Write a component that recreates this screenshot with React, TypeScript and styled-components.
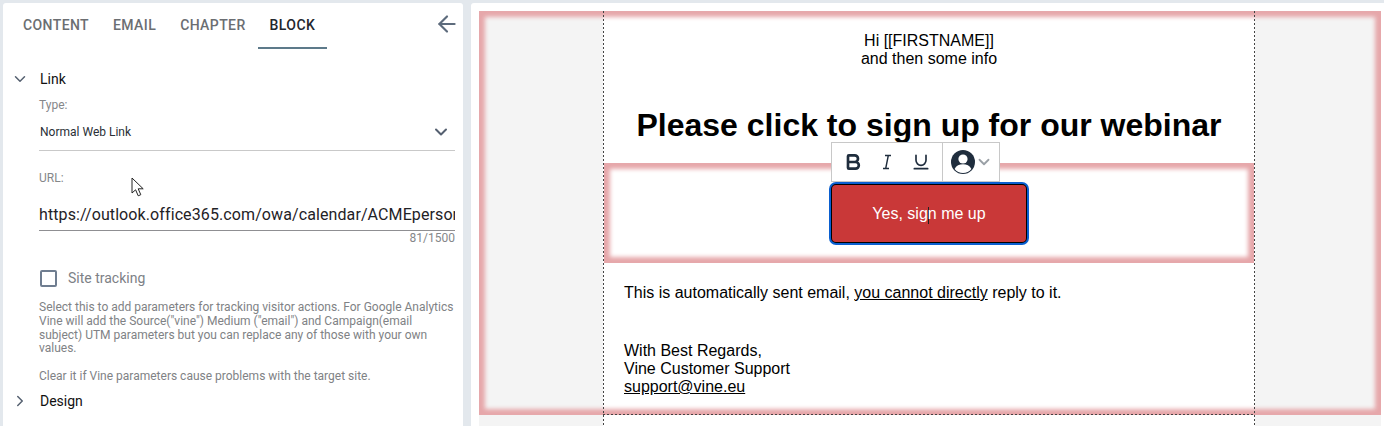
import React from "react";
import styled, { createGlobalStyle } from "styled-components";
import { ArrowLeft, ChevronDown, ChevronRight, Bold, Underline } from "lucide-react";

const GlobalStyle = createGlobalStyle`
  html, body {
    margin: 0;
    padding: 0;
    height: 426px;
    overflow: hidden;
    background: #e3e8ed;
  }
  * {
    box-sizing: border-box;
  }
`;

const Page = styled.div`
  display: flex;
  gap: 8px;
  height: 426px;
  padding: 3px 0 0 3px;
  overflow: hidden;
`;

const Sidebar = styled.aside`
  position: relative;
  flex: 0 0 460px;
  background: #fff;
  border-radius: 3px 3px 0 0;
  font-family: Roboto, sans-serif;
  color: #1b1f24;
`;

const TabBar = styled.div`
  display: flex;
  height: 46px;
  padding-left: 8px;
  align-items: stretch;
  position: relative;
`;

const Tab = styled.div<{ $active?: boolean }>`
  display: flex;
  align-items: center;
  padding: 0 12px;
  height: 46px;
  font-size: 14px;
  font-weight: 500;
  letter-spacing: 0.4px;
  color: ${(p) => (p.$active ? "#22272e" : "#6b6e72")};
  border-bottom: 2px solid ${(p) => (p.$active ? "#5d7a8a" : "transparent")};
`;

const BackIcon = styled(ArrowLeft)`
  position: absolute;
  right: 3px;
  top: 8px;
  color: #5d6b7c;
`;

const SectionRow = styled.div`
  display: flex;
  align-items: center;
  height: 20px;
  font-size: 14px;
  color: #111;
  padding-left: 8px;
  gap: 11px;
  svg {
    color: #556070;
  }
`;

const LinkRow = styled(SectionRow)`
  margin-top: 20px;
`;

const DesignRow = styled(SectionRow)`
  margin-top: 7px;
`;

const Field = styled.div`
  margin-left: 36px;
  width: 416px;
`;

const FieldLabel = styled.div`
  font-size: 12px;
  line-height: 14px;
  color: #85878a;
`;

const TypeLabel = styled(FieldLabel)`
  margin-top: 9px;
`;

const SelectRow = styled.div`
  display: flex;
  align-items: center;
  justify-content: space-between;
  height: 35px;
  margin-top: 4px;
  padding: 0 4px 2px 1px;
  font-size: 12px;
  color: #2a2f36;
  border-bottom: 1px solid #c9c9c9;
  svg {
    color: #556070;
  }
`;

const UrlLabel = styled(FieldLabel)`
  margin-top: 20px;
`;

const UrlInput = styled.div`
  height: 30px;
  margin-top: 16px;
  padding-top: 4px;
  font-size: 16px;
  line-height: 20px;
  white-space: nowrap;
  overflow: hidden;
  color: #1f2226;
  letter-spacing: 0.1px;
  border-bottom: 1px solid #8f8f92;
`;

const Counter = styled.div`
  text-align: right;
  font-size: 12px;
  line-height: 14px;
  color: #85878a;
`;

const CheckRow = styled.div`
  display: flex;
  align-items: center;
  gap: 11px;
  margin-top: 23px;
  height: 20px;
  font-size: 14px;
  color: #7d8186;
`;

const CheckBox = styled.span`
  width: 17px;
  height: 17px;
  margin-left: 1px;
  border: 2px solid #6f7d90;
  border-radius: 2px;
`;

const Help = styled.p`
  margin: 13px 0 0;
  font-size: 12px;
  line-height: 13.8px;
  color: #808285;
`;

const MouseCursor = styled.svg`
  position: absolute;
  left: 128px;
  top: 174px;
`;

const Canvas = styled.main`
  flex: 1;
  min-width: 0;
  background: #fff;
  border-radius: 3px 0 0 0;
  padding: 8px 3px 0 8px;
`;

const Stage = styled.div`
  position: relative;
  height: 100%;
  background: #f4f4f4;
`;

const Frame = styled.div`
  position: absolute;
  left: 0;
  right: 0;
  top: 0;
  height: 404px;
  box-shadow: inset 0 0 4px 6px #e6a7aa;
  pointer-events: none;
  z-index: 2;
`;

const EmailColumn = styled.div`
  width: 652px;
  height: 100%;
  margin-left: 124px;
  background: #fff;
  font-family: "Liberation Sans", Arial, sans-serif;
  color: #000;
  font-size: 16px;
  line-height: 18px;
  display: flex;
  flex-direction: column;
  position: relative;

  /* guide lines of the column, they stay on top of the pink frame */
  &::before {
    content: "";
    position: absolute;
    inset: 0;
    z-index: 3;
    pointer-events: none;
    background:
      repeating-linear-gradient(to bottom, #444 0 2px, transparent 2px 4px) left top / 1px 100% no-repeat,
      repeating-linear-gradient(to bottom, #444 0 2px, transparent 2px 4px) right top / 1px 100% no-repeat;
  }
  &::after {
    content: "";
    position: absolute;
    left: 0;
    right: 0;
    top: 403px;
    height: 1px;
    z-index: 3;
    background: repeating-linear-gradient(to right, #444 0 2px, transparent 2px 4px);
  }
`;

const Greeting = styled.div`
  padding-top: 21px;
  text-align: center;
`;

const Heading = styled.h1`
  margin: 39px 0 0;
  height: 56px;
  text-align: center;
  font-size: 32px;
  line-height: 37px;
  font-weight: 700;
`;

const ButtonBlock = styled.div`
  position: relative;
  height: 100px;
  margin: 0 1px;
  display: flex;
  justify-content: center;
  padding-top: 19px;
  box-shadow: inset 0 0 4px 6px #e6a7aa;
`;

const ButtonOuter = styled.div`
  width: 200px;
  height: 63px;
  border: 2px solid #0a5fd0;
  border-radius: 7px;
  background: #000;
  padding: 1px;
`;

const ButtonFace = styled.div`
  height: 100%;
  border-radius: 4px;
  background: #c93838;
  color: #fff;
  display: flex;
  align-items: center;
  justify-content: center;
  padding-top: 2px;
`;

const Caret = styled.span`
  display: inline-block;
  width: 1px;
  height: 17px;
  margin: 0 -1px 0 0;
  background: #222;
  vertical-align: middle;
`;

const Toolbar = styled.div`
  position: absolute;
  left: 227px;
  top: -21px;
  width: 169px;
  height: 40px;
  display: flex;
  background: #fff;
  border: 1px solid #c8c8c8;
  z-index: 3;
  color: #1f2d3d;
`;

const ToolGroup = styled.div`
  display: flex;
  align-items: center;
  gap: 14px;
  padding-left: 11px;
  width: 111px;
  border-right: 1px solid #c8c8c8;
`;

const AvatarGroup = styled.div`
  display: flex;
  align-items: center;
  padding-left: 8px;
  svg:last-child {
    color: #9aa0a6;
  }
`;

const Body = styled.div`
  padding: 21px 21px 0;
`;

const Spaced = styled.div`
  margin-top: 40px;
`;

const Emph = styled.span`
  text-decoration: underline;
`;

const Avatar = () => (
  <svg width="24" height="24" viewBox="0 0 24 24">
    <circle cx="12" cy="12" r="12" fill="#1f2d3d" />
    <circle cx="12" cy="9" r="4.6" fill="#fff" />
    <path d="M3.6 19c1.6-3.4 4.8-4.8 8.4-4.8s6.800 1.400 8.400 4.800c-2 2.600-5 4-8.400 4s-6.400-1.400-8.400-4z" fill="#fff" />
  </svg>
);

const ItalicMark = () => (
  <svg width="20" height="20" viewBox="0 0 20 20" fill="none" stroke="currentColor">
    <path d="M8 3.500h6M6 16.500h6M11.300 3.500L8.700 16.500" strokeWidth="1.400" />
  </svg>
);

export default function App() {
  return (
    <>
      <GlobalStyle />
      <Page>
        <Sidebar>
          <TabBar>
            <Tab>CONTENT</Tab>
            <Tab>EMAIL</Tab>
            <Tab>CHAPTER</Tab>
            <Tab $active>BLOCK</Tab>
            <BackIcon size={26} strokeWidth={2} />
          </TabBar>
          <LinkRow>
            <ChevronDown size={18} />
            Link
          </LinkRow>
          <Field>
            <TypeLabel>Type:</TypeLabel>
            <SelectRow>
              Normal Web Link
              <ChevronDown size={20} strokeWidth={2.4} />
            </SelectRow>
            <UrlLabel>URL:</UrlLabel>
            <UrlInput>https://outlook.office365.com/owa/calendar/ACMEpersonal/bookings/</UrlInput>
            <Counter>81/1500</Counter>
            <CheckRow>
              <CheckBox />
              Site tracking
            </CheckRow>
            <Help>
              Select this to add parameters for tracking visitor actions. For Google Analytics
              Vine will add the Source("vine") Medium ("email") and Campaign(email subject) UTM
              parameters but you can replace any of those with your own values.
              <br />
              <br />
              Clear it if Vine parameters cause problems with the target site.
            </Help>
          </Field>
          <DesignRow>
            <ChevronRight size={18} />
            Design
          </DesignRow>
          <MouseCursor width="14" height="20" viewBox="0 0 14 20">
            <path d="M1 1v15l3.600-3.200 2.600 6 2.600-1.100-2.600-5.900h5z" fill="#fff" stroke="#222" strokeWidth="1" />
          </MouseCursor>
        </Sidebar>
        <Canvas>
          <Stage>
            <Frame />
            <EmailColumn>
              <Greeting>
                Hi [[FIRSTNAME]]
                <br />
                and then some info
              </Greeting>
              <Heading>Please click to sign up for our webinar</Heading>
              <ButtonBlock>
                <Toolbar>
                  <ToolGroup>
                    <Bold size={20} strokeWidth={3.2} />
                    <ItalicMark />
                    <Underline size={20} strokeWidth={2} />
                  </ToolGroup>
                  <AvatarGroup>
                    <Avatar />
                    <ChevronDown size={18} strokeWidth={2.4} />
                  </AvatarGroup>
                </Toolbar>
                <ButtonOuter>
                  <ButtonFace>
                    <span>
                      Yes, sig
                      <Caret />
                      n me up
                    </span>
                  </ButtonFace>
                </ButtonOuter>
              </ButtonBlock>
              <Body>
                <div>
                  This is automatically sent email, <Emph>you cannot directly</Emph> reply to it.
                </div>
                <Spaced>
                  With Best Regards,
                  <br />
                  Vine Customer Support
                  <br />
                  <Emph>support@vine.eu</Emph>
                </Spaced>
              </Body>
            </EmailColumn>
          </Stage>
        </Canvas>
      </Page>
    </>
  );
}
